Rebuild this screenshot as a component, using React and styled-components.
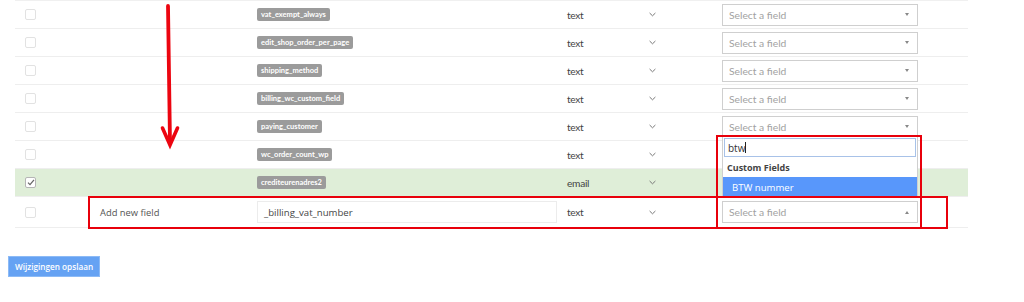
import React from "react";
import styled, { createGlobalStyle } from "styled-components";

const GlobalStyle = createGlobalStyle`
  html, body {
    margin: 0;
    padding: 0;
    background: #fff;
    font-family: Lato, "Open Sans", sans-serif;
  }
`;

const Page = styled.div`
  position: relative;
  width: 1024px;
  height: 302px;
  overflow: hidden;
`;

const Table = styled.div`
  margin-left: 15px;
  width: 953px;
  border-top: 1px solid #f0f0f0;
`;

const Row = styled.div`
  display: grid;
  grid-template-columns: 73px 169px 310px 81px 74px 196px 50px;
  align-items: center;
  height: ${(p) => (p.$tall ? "30px" : "27px")};
  border-bottom: 1px solid #eeeeee;
  background: ${(p) => (p.$selected ? "#dfeed8" : "#fff")};
`;

const Cell = styled.div`
  position: relative;
  display: flex;
  align-items: center;
  padding-left: ${(p) => p.$pad || 0}px;
`;

const Checkbox = styled.span`
  display: inline-flex;
  align-items: center;
  justify-content: center;
  width: 9px;
  height: 9px;
  margin-left: 10px;
  border: 1px solid ${(p) => (p.$checked ? "#b5b5b5" : "#e2e2e2")};
  border-radius: 2px;
  background: #fff;
`;

const Badge = styled.span`
  display: inline-block;
  background: #9b9b9b;
  color: #fff;
  font-family: Lato, sans-serif;
  font-weight: 700;
  font-size: 7.5px;
  line-height: 13px;
  padding: 0 4px;
  border-radius: 2px;
`;

const TypeText = styled.span`
  font-family: Lato, sans-serif;
  font-size: 10.2px;
  color: #444;
  letter-spacing: -0.3px;
`;

const Chevron = styled.svg`
  width: 7px;
  height: 5px;
  margin-left: 1px;
`;

const Select = styled.div`
  box-sizing: border-box;
  display: flex;
  align-items: center;
  justify-content: space-between;
  width: 196px;
  height: 22px;
  padding: 0 8px 0 6px;
  background: #fff;
  border: 1px solid #cfcfcf;
  font-family: Lato, sans-serif;
  font-size: 10.3px;
  color: #a2a2a2;
`;

const Caret = styled.span`
  width: 0;
  height: 0;
  border-left: 2.5px solid transparent;
  border-right: 2.5px solid transparent;
  ${(p) =>
    p.$up
      ? "border-bottom: 3px solid #888;"
      : "border-top: 3px solid #888;"}
`;

const AddLabel = styled.span`
  font-family: "Open Sans", sans-serif;
  font-size: 9.4px;
  color: #555;
`;

const TextInput = styled.div`
  box-sizing: border-box;
  width: 300px;
  height: 22px;
  display: flex;
  align-items: center;
  padding-left: 6px;
  border: 1px solid #ececec;
  font-family: "Open Sans", sans-serif;
  font-size: 9.6px;
  color: #444;
`;

const Dropdown = styled.div`
  position: absolute;
  left: 0;
  bottom: 26px;
  box-sizing: border-box;
  width: 196px;
  background: #fff;
  border: 1px solid #cfcfcf;
  border-bottom: none;
  padding-top: 1px;
  z-index: 2;
`;

const Search = styled.div`
  box-sizing: border-box;
  height: 19px;
  margin: 0 1px;
  border: 1px solid #a8c2e8;
  display: flex;
  align-items: center;
  padding-left: 3px;
  font-family: "Open Sans", sans-serif;
  font-size: 10px;
  color: #333;
`;

const Cursor = styled.span`
  display: inline-block;
  width: 1px;
  height: 11px;
  background: #222;
`;

const GroupLabel = styled.div`
  height: 20px;
  display: flex;
  align-items: center;
  padding-left: 4px;
  font-family: "Open Sans", sans-serif;
  font-weight: 700;
  font-size: 9px;
  color: #444;
`;

const Option = styled.div`
  height: 20px;
  display: flex;
  align-items: center;
  padding-left: 9px;
  background: #5897fb;
  color: #fff;
  font-family: "Open Sans", sans-serif;
  font-size: 9.6px;
`;

const SaveButton = styled.button`
  display: block;
  margin: 28px 0 0 8px;
  height: 21px;
  padding: 0 6px;
  background: #65a2f3;
  border: 1px solid #8cbaf6;
  color: #fff;
  font-family: "Open Sans", sans-serif;
  font-weight: 600;
  font-size: 8.2px;
`;

const Annotation = styled.div`
  position: absolute;
  box-sizing: border-box;
  border: 2px solid #e8000b;
  pointer-events: none;
  z-index: 3;
`;

const ArrowSvg = styled.svg`
  position: absolute;
  left: 155px;
  top: 0;
  z-index: 3;
`;

// rows 6 and 7 sit under the open dropdown, so their select is not visible
const fields = [
  { key: "vat_exempt_always", type: "text" },
  { key: "edit_shop_order_per_page", type: "text" },
  { key: "shipping_method", type: "text" },
  { key: "billing_wc_custom_field", type: "text" },
  { key: "paying_customer", type: "text" },
  { key: "wc_order_count_wp", type: "text", covered: true },
  { key: "crediteurenadres2", type: "email", selected: true, covered: true },
];

const Down = () => (
  <Chevron viewBox="0 0 7 5">
    <path d="M0.6 1 L3.5 3.8 L6.4 1" fill="none" stroke="#777" strokeWidth="1" />
  </Chevron>
);

const Check = () => (
  <svg width="8" height="7" viewBox="0 0 8 7">
    <path d="M1 3.6 L3 5.6 L7 0.8" fill="none" stroke="#666" strokeWidth="1.3" />
  </svg>
);

export default function App() {
  return (
    <Page>
      <GlobalStyle />
      <Table>
        {fields.map((f) => (
          <Row key={f.key} $selected={f.selected}>
            <Cell>
              <Checkbox $checked={f.selected}>{f.selected && <Check />}</Checkbox>
            </Cell>
            <Cell />
            <Cell>
              <Badge>{f.key}</Badge>
            </Cell>
            <Cell>
              <TypeText>{f.type}</TypeText>
            </Cell>
            <Cell>
              <Down />
            </Cell>
            <Cell>
              {!f.covered && (
                <Select>
                  <span>Select a field</span>
                  <Caret />
                </Select>
              )}
            </Cell>
            <Cell />
          </Row>
        ))}
        <Row $tall>
          <Cell>
            <Checkbox />
          </Cell>
          <Cell $pad={12}>
            <AddLabel>Add new field</AddLabel>
          </Cell>
          <Cell>
            <TextInput>_billing_vat_number</TextInput>
          </Cell>
          <Cell>
            <TypeText>text</TypeText>
          </Cell>
          <Cell>
            <Down />
          </Cell>
          <Cell>
            <Dropdown>
              <Search>
                btw<Cursor />
              </Search>
              <GroupLabel>Custom Fields</GroupLabel>
              <Option>BTW nummer</Option>
            </Dropdown>
            <Select>
              <span>Select a field</span>
              <Caret $up />
            </Select>
          </Cell>
          <Cell />
        </Row>
      </Table>
      <SaveButton>Wijzigingen opslaan</SaveButton>

      <Annotation style={{ left: 88, top: 196, width: 860, height: 33 }} />
      <Annotation style={{ left: 716, top: 135, width: 206, height: 94 }} />
      <ArrowSvg width="30" height="150" viewBox="0 0 30 150">
        <path d="M13 6 L15 143" stroke="#ec0510" strokeWidth="3.8" strokeLinecap="round" fill="none" />
        <path d="M7.5 128 L15 145 L22.5 128" stroke="#ec0510" strokeWidth="3.6" strokeLinecap="round" strokeLinejoin="miter" fill="none" />
      </ArrowSvg>
    </Page>
  );
}
